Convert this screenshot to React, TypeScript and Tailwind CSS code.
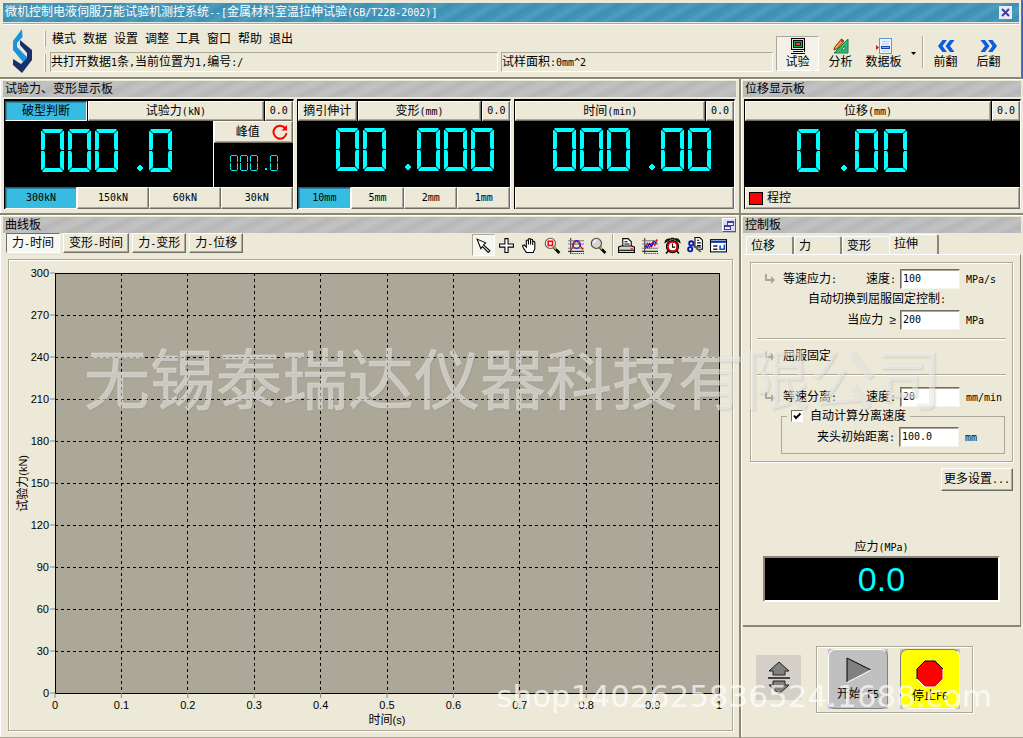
import React from "react";

const raised =
  "border border-t-white border-l-white border-r-[#716f64] border-b-[#716f64] bg-[#ece9d8] shadow-[inset_-1px_-1px_0_#aca899]";
const pressed =
  "border border-t-[#1d5f78] border-l-[#1d5f78] border-r-white border-b-white bg-[#38bbe0] shadow-[inset_1px_1px_0_#2687a6]";
const sunken =
  "border border-t-[#aca899] border-l-[#aca899] border-r-white border-b-white";
const etched =
  "border border-[#aca899] shadow-[1px_1px_0_#fff,inset_1px_1px_0_#fff]";
const strip =
  "bg-[repeating-linear-gradient(155deg,#b7b7b7_0px,#bfbfbf_5px,#c2c2c2_8px,#b7b7b7_14px)]";
const mono = "font-['DejaVu_Sans_Mono',monospace] text-[10px]";

/** Sets Latin runs in a half-width face beside the full-width Chinese text. */
function T({ children }: { children: string }) {
  const runs = children.match(/[\x20-\x7e]+|[^\x20-\x7e]+/g) ?? [];
  return (
    <>
      {runs.map((run, i) =>
        /^[\x20-\x7e]/.test(run) ? (
          <span key={i} className={`whitespace-pre ${mono}`}>
            {run}
          </span>
        ) : (
          run
        ),
      )}
    </>
  );
}

const BIG_SEGMENTS = [
  "2,0 21,0 22,1 19,4 4,4 1,1",
  "0,2 1,2 4,5 4,19 3,21 0,21",
  "23,2 22,2 19,5 19,19 20,21 23,21",
  "0,41 1,41 4,38 4,24 3,22 0,22",
  "23,41 22,41 19,38 19,24 20,22 23,22",
  "2,43 21,43 22,42 19,39 4,39 1,42",
];

function Lcd({ value, pitch = 27 }: { value: string; pitch?: number }) {
  return (
    <svg role="img" aria-label={value} width={pitch * value.length} height="43" className="shrink-0 fill-[#00ffff]">
      {value.split("").map((ch, i) => (
        <g key={i} transform={`translate(${i * pitch} 0)`}>
          {ch === "." ? (
            <polygon points="18,36 21,39 18,42 15,39" stroke="#00ffff" strokeWidth="1" />
          ) : (
            BIG_SEGMENTS.map((p) => <polygon key={p} points={p} />)
          )}
        </g>
      ))}
    </svg>
  );
}

function SmallLcd({ value }: { value: string }) {
  return (
    <svg role="img" aria-label={value} width={10 * value.length} height="16" fill="none" stroke="#00e5e5" shapeRendering="crispEdges">
      {value.split("").map((ch, i) => (
        <g key={i} transform={`translate(${i * 10} 0)`}>
          {ch === "." ? (
            <rect x="5" y="13" width="1" height="1" />
          ) : (
            <>
              <path d="M1 .5H7M1 15.500H7" />
              <path d="M.5 1V7M.5 8V15M7.5 1V7M7.5 8V15" />
            </>
          )}
        </g>
      ))}
    </svg>
  );
}

function PanelTitle({ children, action }: { children: string; action?: React.ReactNode }) {
  return (
    <div className={`flex h-4 items-center justify-between pl-[2px] ${strip}`}>
      <h2 className="leading-4">{children}</h2>
      {action}
    </div>
  );
}

function Cell({ on, className = "", children }: { on?: boolean; className?: string; children?: React.ReactNode }) {
  return (
    <button type="button" className={`flex items-center justify-center whitespace-nowrap ${on ? pressed : raised} ${className}`}>
      {children}
    </button>
  );
}

function Meter({ lead, leadOn, title, body, ranges, footer }: {
  lead?: string;
  leadOn?: boolean;
  title: string;
  body: React.ReactNode;
  ranges?: string[];
  footer?: React.ReactNode;
}) {
  return (
    <section className="flex min-w-0 flex-col border-t-2 border-l border-r border-t-black border-l-black border-r-white bg-black">
      <div className="flex h-5 gap-px">
        {lead && (
          <Cell on={leadOn} className={leadOn ? "w-[82px]" : "w-[59px]"}>
            {lead}
          </Cell>
        )}
        <Cell className="flex-1">
          <span>
            <T>{title}</T>
          </span>
        </Cell>
        <Cell className="w-7">
          <T>0.0</T>
        </Cell>
      </div>
      <div className="flex h-[66px]">{body}</div>
      <div className="flex h-[22px]">
        {ranges
          ? ranges.map((r, i) => (
              <Cell key={r} on={i === 0} className="flex-1">
                <T>{r}</T>
              </Cell>
            ))
          : footer}
      </div>
    </section>
  );
}

function Glyph({ children }: { children: React.ReactNode }) {
  return (
    <svg width="17" height="17" viewBox="0 0 16 16" fill="none" stroke="#000" aria-hidden="true">
      {children}
    </svg>
  );
}

const axes = (
  <>
    <path d="M3.5 1V15.5M1 13.5H16" stroke="#333" />
    <path d="M1 3.5H16M1 6.5H16M1 10.5H16" stroke="#777" />
    <path d="M3 15.5H16" stroke="#333" strokeDasharray="1 1" />
  </>
);

const tools: { name: string; icon: React.ReactNode }[] = [
  { name: "选择", icon: <path d="M2 2L10 5.5L8 7.5L14 13L12.500 14.500L7 9L5.500 11Z" fill="#fff" /> },
  { name: "十字", icon: <path d="M6.5 1.500H9.500V6.500H14.500V9.500H9.500V14.500H6.500V9.500H1.500V6.500H6.500Z" fill="#fff" /> },
  {
    name: "平移",
    icon: (
      <path
        d="M5 14.500L2 10L1.500 8L3 7.500L5 9.500V3.500Q6 2 7 3.500V7V2Q8 .7 9 2V7V2.500Q10 1.500 11 2.800V7.500V4.500Q12.300 3.500 13 5V11L11.500 14.500Z"
        fill="#fff"
      />
    ),
  },
  {
    name: "框选放大",
    icon: (
      <>
        <path d="M9.500 10L14.500 15" strokeWidth="2.500" />
        <path d="M9.500 9.500L11.500 11.500" stroke="#e8d000" strokeWidth="1.500" />
        <circle cx="6" cy="6" r="4.800" fill="#fff" stroke="#555" />
        <rect x="4" y="4" width="4" height="4" stroke="#f00" strokeWidth="1.500" />
      </>
    ),
  },
  {
    name: "曲线放大",
    icon: (
      <>
        {axes}
        <path d="M4 12L7 6Q9 2 11 6L15 12" stroke="#e00" />
        <circle cx="9" cy="7" r="3.500" stroke="#00f" />
      </>
    ),
  },
  {
    name: "放大镜",
    icon: (
      <>
        <path d="M9.500 10L14.500 15" strokeWidth="2.500" />
        <path d="M9.500 9.500L11.500 11.500" stroke="#e8d000" strokeWidth="1.500" />
        <circle cx="6" cy="6" r="4.800" fill="#d4d4d4" stroke="#444" />
        <path d="M3.500 6Q4 3.500 6 3.500" stroke="#fff" />
      </>
    ),
  },
  {
    name: "打印",
    icon: (
      <>
        <path d="M4.500 9V1.500H9.500L12.500 4.500V9" fill="#fff" />
        <path d="M6 4.500H9M6 6.500H11" />
        <path d="M.5 9.500L3 8.500H13L15.500 9.500V14.500H.5Z" fill="#d8d4c4" />
        <path d="M1 12.500H15" />
        <path d="M12 11H14" stroke="#f00" />
      </>
    ),
  },
  {
    name: "曲线",
    icon: (
      <>
        {axes}
        <path d="M4 11L6 6L8 10L11 5L13 8L15 2" stroke="#e00" />
        <path d="M4 8L6 10L8 6L10 9L12 4L15 6" stroke="#00f" />
      </>
    ),
  },
  {
    name: "定时",
    icon: (
      <>
        <path d="M1 5Q2 1 6 2ZM15 5Q14 1 10 2Z" fill="#888" />
        <path d="M6.500 1.500H9.500M4 13L2 15.500M12 13L14 15.500" strokeWidth="1.500" />
        <circle cx="8" cy="9" r="5" fill="#fff" strokeWidth="2.500" />
        <circle cx="8" cy="9" r="4.500" stroke="#f00" strokeWidth="1.500" />
        <path d="M8 6V9.500H10.500" />
      </>
    ),
  },
  {
    name: "剪切",
    icon: (
      <>
        <path d="M7.500 10V.5H12L14.500 3V11.500H9" fill="#fff" />
        <path d="M9.500 3H11.500M9.500 5.500H13M9.500 8H13" />
        <path d="M6 8L13 14M6 9L13 9.500" stroke="#555" strokeWidth="1.500" />
        <circle cx="4" cy="6" r="2" stroke="#0018b0" strokeWidth="1.700" />
        <circle cx="3" cy="11.500" r="2" stroke="#0018b0" strokeWidth="1.700" />
      </>
    ),
  },
  {
    name: "报表",
    icon: (
      <>
        <rect x=".5" y="2.500" width="15" height="11.500" fill="#fff" />
        <path d="M1 4.500H15" stroke="#0030d0" strokeWidth="2" />
        <path d="M3 8.500H7M3 11.500H7" stroke="#222" strokeWidth="1.500" />
        <path d="M9.500 8V11.500H13.500V7" stroke="#0050c0" strokeWidth="1.500" />
      </>
    ),
  },
];

function ToolButton({ label, active, icon }: { label: string; active?: boolean; icon: React.ReactNode }) {
  return (
    <button type="button" className={`flex h-[35px] w-[43px] flex-col items-center justify-end border whitespace-nowrap ${active ? "border-t-[#aca899] border-l-[#aca899] border-r-white border-b-white bg-[#f3f1e8]" : "border-transparent"}`}>
      {icon}
      <span className="leading-4">{label}</span>
    </button>
  );
}

function Chevrons({ flip }: { flip?: boolean }) {
  return (
    <svg width="18" height="16" viewBox="0 0 18 16" className={flip ? "-scale-x-100" : ""} fill="#0a5ce0" aria-hidden="true">
      <path d="M5.500 2H10L5.500 8L10 14H5.500L1 8ZM13 2H17.500L13 8L17.500 14H13L8.500 8Z" />
    </svg>
  );
}

function Chart() {
  const xs = Array.from({ length: 11 }, (_, i) => i);
  return (
    <div className={`mr-[6px] ml-2 mt-px mb-[6px] flex flex-1 ${etched} pt-[13px] pr-[13px]`}>
      <div className="flex w-[46px] items-center justify-start pb-9 pl-[6px]">
        <span className="rotate-180 leading-4 [text-orientation:sideways] [writing-mode:vertical-rl]">
          试验力<span className="text-[11px]">(kN)</span>
        </span>
      </div>
      <div className="flex flex-1 flex-col">
        <svg className="min-h-0 w-full flex-1 overflow-visible font-['Liberation_Sans',sans-serif] text-[11px]" stroke="#000">
          <rect width="100%" height="100%" fill="#aca899" shapeRendering="crispEdges" />
          {xs.map((i) => (
            <g key={i}>
              {i > 0 && i < 10 && (
                <>
                  <line x1={`${i * 10}%`} x2={`${i * 10}%`} y1="0" y2="100%" strokeDasharray="3 3" shapeRendering="crispEdges" />
                  <line y1={`${i * 10}%`} y2={`${i * 10}%`} x1="0" x2="100%" strokeDasharray="3 3" shapeRendering="crispEdges" />
                </>
              )}
              <svg x={`${i * 10}%`} y="100%" className="overflow-visible">
                <path d="M0 0V5" stroke="#888" />
                <text y="16" textAnchor="middle" stroke="none">
                  {i === 10 ? "1" : i === 0 ? "0" : `0.${i}`}
                </text>
              </svg>
              <svg y={`${i * 10}%`} className="overflow-visible">
                <path d="M-5 0H0" stroke="#888" />
                <text x="-6" y="4" textAnchor="end" stroke="none">
                  {300 - i * 30}
                </text>
              </svg>
            </g>
          ))}
        </svg>
        <div className="flex h-[37px] items-end justify-center pb-[2px] leading-4">
          <span>
            时间<span className="text-[11px]">(s)</span>
          </span>
        </div>
      </div>
    </div>
  );
}

const inputBox = `h-5 w-[60px] border border-t-[#716f64] border-l-[#716f64] border-r-[#f5f4ea] border-b-[#f5f4ea] bg-white pl-[2px] pb-[2px] ${mono} shadow-[inset_1px_1px_0_#aca899]`;

function Branch() {
  return (
    <svg width="19" height="14" viewBox="0 0 19 14" fill="none" stroke="#aca899" strokeWidth="2" aria-hidden="true">
      <path d="M2 2V8H9" />
      <path d="M7 4L11 8L7 12Z" fill="#aca899" stroke="none" />
    </svg>
  );
}

function Field({ id, name, label, value, unit, narrow }: {
  id: string;
  name?: string;
  label: string;
  value: string;
  unit: string;
  narrow?: boolean;
}) {
  return (
    <div className="flex h-5 items-center">
      {name && (
        <>
          <Branch />
          <span>
            <T>{name}</T>
          </span>
        </>
      )}
      <label htmlFor={id} className="mr-1 ml-auto">
        <T>{label}</T>
      </label>
      <input id={id} defaultValue={value} className={inputBox} />
      <span className={`ml-[6px] ${narrow ? "w-[39px]" : "w-[46px]"}`}>
        <T>{unit}</T>
      </span>
    </div>
  );
}

const Rule = () => <div className="mx-[6px] h-[2px] border-t border-b border-t-[#aca899] border-b-white" />;

export default function App() {
  return (
    <div className="relative flex min-h-screen flex-col overflow-hidden bg-[#ece9d8] font-['Liberation_Sans','Noto_Sans_CJK_SC',sans-serif] text-[12px] leading-4 text-black">
      <header className="border-r border-b-2 border-r-[#3c62b8] border-b-[#8a8778] pt-[3px] shadow-[inset_-1px_0_0_#716f64]">
        <div className="mr-[3px] ml-[3px] flex h-[19px] items-center justify-between bg-[repeating-linear-gradient(150deg,#3c8fb2_0px,#4396b8_6px,#509ebe_9px,#4192b4_14px)] pr-[7px] pl-[2px] text-white">
          <h1>
            <T>微机控制电液伺服万能试验机测控系统--[金属材料室温拉伸试验(GB/T228-2002)]</T>
          </h1>
          <button type="button" aria-label="关闭" className="flex h-[13px] w-[13px] items-center justify-center bg-[#ece9f0]">
            <svg width="9" height="9" viewBox="0 0 9 9" stroke="#3a3fa0" strokeWidth="2">
              <path d="M1 1L8 8M8 1L1 8" />
            </svg>
          </button>
        </div>
        <div className="mx-[3px] mt-px flex h-[54px] border-t border-t-[#aca899] pr-[9px] shadow-[inset_0_1px_0_#fff]">
          <div className="flex w-[41px] items-center pl-[9px]">
            <svg width="22" height="46" viewBox="0 0 22 46" aria-hidden="true">
              <path d="M10 1L10.500 9L5 15V19L16 30L11 34L1 22V13Z" fill="#1a94e0" />
              <path d="M8 12L20 22V32L10 45L1 37V31L9 36L15 30V25L8 17Z" fill="#17306e" />
            </svg>
          </div>
          <div className="flex min-w-0 flex-1 flex-col">
            <div className="flex h-[26px] items-center pt-1">
              <span className="h-4 w-[2px] border-r border-l border-r-[#aca899] border-l-white" />
              <nav className="ml-[6px] flex gap-[7px]">
                {["模式", "数据", "设置", "调整", "工具", "窗口", "帮助", "退出"].map((m) => (
                  <a key={m} href="#">
                    {m}
                  </a>
                ))}
              </nav>
            </div>
            <div className="flex h-[22px] items-end gap-[3px]">
              <span className="mr-px h-[18px] w-[2px] border-r border-l border-r-[#aca899] border-l-white" />
              <div className={`h-5 flex-[449] truncate leading-[18px] ${sunken}`}>
                <T>共打开数据1条,当前位置为1,编号:/</T>
              </div>
              <div className={`h-5 flex-[272] truncate leading-[18px] ${sunken}`}>
                <T>试样面积:0mm^2</T>
              </div>
            </div>
          </div>
          <div className="ml-[3px] flex items-start pt-[12px]">
            <ToolButton
              label="试验"
              active
              icon={
                <svg width="16" height="16" viewBox="0 0 16 16" stroke="#000" shapeRendering="crispEdges" aria-hidden="true">
                  <rect x="1.500" y=".5" width="13" height="11" fill="#ddd" />
                  <rect x="3.500" y="2.500" width="9" height="7" fill="#00c020" />
                  <rect x="5.500" y="4.500" width="5" height="3" fill="#f030a0" stroke="#222" />
                  <path d="M3 13.500H13M1 15.500H15M14.500 12V14" />
                </svg>
              }
            />
            <ToolButton
              label="分析"
              icon={
                <svg width="16" height="16" viewBox="0 0 16 16" aria-hidden="true">
                  <path d="M15 1V15H1Z" fill="#35b878" stroke="#14804a" />
                  <path d="M12 8V12H8Z" fill="#ece9d8" stroke="#14804a" />
                  <path d="M1.500 9.500L8.500 1L11 3L4.500 10.500L1 12Z" fill="#f0a030" stroke="#8a2a10" />
                  <path d="M8.500 1L11 3L9.500 4.500L7 2.500Z" fill="#d83020" />
                </svg>
              }
            />
            <ToolButton
              label="数据板"
              icon={
                <svg width="18" height="16" viewBox="0 0 18 16" aria-hidden="true">
                  <rect x="4.500" y=".5" width="12" height="15" fill="#eef3fa" stroke="#5a9ad8" />
                  <path d="M7 3.500H14M7 6H14M7 13H14" stroke="#bcc8d8" />
                  <rect x="6.500" y="8.500" width="8" height="2" fill="#80b0f0" stroke="#1040b0" />
                  <path d="M1 7L4 9.500L1 12Z" fill="#e01010" />
                </svg>
              }
            />
            <button type="button" aria-label="更多" className="flex h-[35px] w-[17px] items-center justify-center">
              <svg width="5" height="3" viewBox="0 0 5 3">
                <path d="M0 0H5L2.500 3Z" />
              </svg>
            </button>
            <span className="h-8 w-[2px] border-r border-l border-r-white border-l-[#aca899]" />
            <ToolButton label="前翻" icon={<Chevrons />} />
            <ToolButton label="后翻" icon={<Chevrons flip />} />
          </div>
        </div>
      </header>

      <main className="grid flex-1 grid-cols-[minmax(0,1fr)_282px] grid-rows-[auto_1fr]">
        <section className="border-r-2 border-b-2 border-r-[#8a8778] border-b-[#8a8778] pt-[2px] pr-[3px] pl-[3px] shadow-[inset_1px_1px_0_#fff]">
          <PanelTitle>试验力、变形显示板</PanelTitle>
          <div className="grid grid-cols-[289fr_214fr_220fr] gap-[3px] pt-[2px] pr-px pb-1 pl-px">
            <Meter
              lead="破型判断"
              leadOn
              title="试验力(kN)"
              ranges={["300kN", "150kN", "60kN", "30kN"]}
              body={
                <>
                  <div className="flex flex-1 items-center pb-[7px] pl-9">
                    <Lcd value="000.0" />
                  </div>
                  <div className="flex w-20 flex-col border-l border-white">
                    <button type="button" className={`flex h-[22px] items-center justify-end gap-3 pr-1 ${raised}`}>
                      峰值
                      <svg width="16" height="16" viewBox="0 0 16 16" fill="none" stroke="#f00" strokeWidth="2" aria-hidden="true">
                        <path d="M13 4A6.500 6.500 0 1 0 14.500 9" />
                        <path d="M15 1V6.500H9.500Z" fill="#f00" stroke="none" />
                      </svg>
                    </button>
                    <div className="flex flex-1 items-center pb-1 pl-4">
                      <SmallLcd value="000.0" />
                    </div>
                  </div>
                </>
              }
            />
            <Meter
              lead="摘引伸计"
              title="变形(mm)"
              ranges={["10mm", "5mm", "2mm", "1mm"]}
              body={
                <div className="flex flex-1 items-center pb-[9px] pl-[38px]">
                  <Lcd value="00.000" />
                </div>
              }
            />
            <Meter
              title="时间(min)"
              footer={<div className={`flex-1 ${raised}`} />}
              body={
                <div className="flex flex-1 items-center pb-[9px] pl-[38px]">
                  <Lcd value="000.00" />
                </div>
              }
            />
          </div>
        </section>

        <section className="border-b-2 border-b-[#8a8778] pt-[2px] pr-[2px] pl-[2px] shadow-[inset_1px_1px_0_#fff]">
          <PanelTitle>位移显示板</PanelTitle>
          <div className="grid pt-[2px] pb-1 pl-px">
            <Meter
              title="位移(mm)"
              footer={
                <div className={`flex flex-1 items-center gap-1 pl-[3px] ${raised}`}>
                  <span className="h-[13px] w-[14px] border border-black bg-[#f00]" />
                  程控
                </div>
              }
              body={
                <div className="flex flex-1 items-center pb-[7px] pl-[52px]">
                  <Lcd value="0.00" pitch={29} />
                </div>
              }
            />
          </div>
        </section>

        <section className="flex flex-col border-r-2 border-b border-r-[#8a8778] border-b-[#aca899] pt-[2px] shadow-[inset_1px_1px_0_#fff]">
          <div className="pr-[3px] pl-[3px]">
            <PanelTitle
              action={
                <button type="button" aria-label="还原窗口" className="flex h-[14px] w-[14px] items-center justify-center border border-t-white border-l-white border-r-[#3060b0] border-b-[#3060b0] bg-[#dcdcf0]">
                  <svg width="10" height="10" viewBox="0 0 10 10" fill="#ececfa" stroke="#3a3fa0" shapeRendering="crispEdges">
                    <rect x="3.500" y="1" width="6" height="4" />
                    <path d="M3 1.500H10" strokeWidth="2" />
                    <rect x=".5" y="5" width="6" height="4" />
                    <path d="M0 5.500H7" strokeWidth="2" />
                  </svg>
                </button>
              }
            >
              曲线板
            </PanelTitle>
          </div>
          <div className="flex h-[25px] items-start justify-between pr-[9px] pl-[6px]">
            <div className="flex gap-[3px]">
              {["力-时间", "变形-时间", "力-变形", "力-位移"].map((t, i) => (
                <button
                  key={t}
                  type="button"
                  className={`h-5 px-[5px] whitespace-nowrap leading-[17px] ${i === 0 ? "border border-t-[#716f64] border-l-[#716f64] border-r-white border-b-white bg-[#f8f7f1]" : raised}`}
                >
                  <T>{t}</T>
                </button>
              ))}
            </div>
            <div className="flex items-center pt-px">
              {tools.map((t, i) => (
                <React.Fragment key={t.name}>
                  {i === 6 && <span className="mr-px ml-[2px] h-[22px] w-[2px] border-r border-l border-r-white border-l-[#aca899]" />}
                  <button
                    type="button"
                    aria-label={t.name}
                    className={`flex h-[22px] w-[23px] items-center justify-center border ${i === 0 ? "border-t-[#aca899] border-l-[#aca899] border-r-white border-b-white bg-[#f6f5ee]" : "border-transparent"}`}
                  >
                    <Glyph>{t.icon}</Glyph>
                  </button>
                </React.Fragment>
              ))}
            </div>
          </div>
          <Chart />
        </section>

        <section className="flex flex-col border-b border-b-[#aca899] pt-[2px] pr-[2px] pl-[2px] shadow-[inset_1px_1px_0_#fff]">
          <PanelTitle>控制板</PanelTitle>
          <div role="tablist" className="flex h-[21px] items-end pl-[3px]">
            {["位移", "力", "变形", "拉伸"].map((t, i) => (
              <button
                key={t}
                type="button"
                role="tab"
                aria-selected={i === 3}
                className={`rounded-t-[3px] border-t border-l border-t-white border-l-white pl-1 text-left ${i === 3 ? "h-5 w-[50px] border-r-2 border-r-[#8a8778] pb-[2px]" : i === 2 ? "h-[18px] w-[47px]" : "h-[18px] w-12 border-r-2 border-r-[#8a8778]"}`}
              >
                {t}
              </button>
            ))}
          </div>
          <div className="flex flex-1 flex-col border-t border-r border-b-2 border-t-white border-r-[#8a8778] border-b-[#8a8778] pt-[7px] pr-[7px] pl-[7px]">
            <div className={`pt-[6px] pb-[7px] ${etched}`}>
              <div className="pl-[13px]">
                <Field id="stress-rate" name="等速应力:" label="速度:" value="100" unit="MPa/s" />
                <p className="pl-[44px] leading-5">
                  <T>自动切换到屈服固定控制:</T>
                </p>
                <Field id="stress-limit" label="当应力 ≥" value="200" unit="MPa" />
              </div>
              <div className="pt-2 pb-[6px]">
                <Rule />
              </div>
              <div className="flex h-5 items-center pl-[13px]">
                <Branch />
                屈服固定
              </div>
              <div className="pt-2 pb-[11px]">
                <Rule />
              </div>
              <div className="pl-[13px]">
                <Field id="split-rate" name="等速分离:" label="速度:" value="20" unit="mm/min" />
              </div>
              <fieldset className="mr-[7px] ml-[30px] border border-[#aca899] pb-[6px]">
                <legend className="ml-[5px] px-1">
                  <label className="flex h-[18px] items-center gap-[7px]">
                    <span className="relative h-3 w-3">
                      <input
                        type="checkbox"
                        defaultChecked
                        className="peer block h-3 w-3 appearance-none border border-t-[#716f64] border-l-[#716f64] border-r-white border-b-white bg-white"
                      />
                      <svg viewBox="0 0 12 12" className="pointer-events-none absolute inset-0 hidden h-3 w-3 peer-checked:block" fill="none" stroke="#000" strokeWidth="2">
                        <path d="M3 5.500L5 8L9.500 3.500" />
                      </svg>
                    </span>
                    自动计算分离速度
                  </label>
                </legend>
                <div className="pt-[2px]">
                  <Field id="grip-distance" label="夹头初始距离:" value="100.0" unit="mm" narrow />
                </div>
              </fieldset>
            </div>
            <button type="button" className={`mt-[6px] h-[23px] self-end px-[2px] ${raised}`}>
              <T>更多设置...</T>
            </button>
            <div className="mt-auto px-[13px] pb-[23px] text-center">
              <div>
                <T>应力(MPa)</T>
              </div>
              <output className="block h-[46px] border-2 border-t-[#8a8778] border-l-[#8a8778] border-r-white border-b-white bg-black text-[34px] leading-[42px] text-[#00ffff]">
                0.0
              </output>
            </div>
          </div>
          <div className="flex h-[110px] items-start gap-[15px] pt-[19px] pl-[13px]">
            <button type="button" aria-label="升降" className="mt-[9px] flex h-[45px] w-[45px] items-center justify-center bg-[#d4d0c8]">
              <svg width="22" height="34" viewBox="0 0 22 34" fill="#808080" stroke="#222">
                <path d="M11 1L21 10H17V14H5V10H1Z" />
                <path d="M11 33L21 24H17V20H5V24H1Z" />
                <path d="M0 17H22" stroke="#444" strokeWidth="2" />
              </svg>
            </button>
            <div className={`flex h-[67px] w-[157px] items-start gap-3 pt-[2px] pl-[11px] ${etched}`}>
              <div className="bg-[#c0c0c8]">
                <button type="button" className="flex h-[60px] w-[60px] flex-col items-center rounded-[7px] border border-t-white border-l-white border-r-[#808080] border-b-[#808080] bg-[#c0c0c0] pt-[7px]">
                  <svg width="27" height="27" viewBox="0 0 27 27">
                    <path d="M2 1L26 13L2 25Z" fill="#808080" />
                    <path d="M2 25V1L26 13" fill="none" stroke="#000" />
                    <path d="M26 13L2 25.500" stroke="#fff" />
                  </svg>
                  <span className="mt-[2px]">
                    <T>开始 F5</T>
                  </span>
                </button>
              </div>
              <div className="bg-[#c0c0c8]">
                <button type="button" className="flex h-[60px] w-[60px] flex-col items-center rounded-[7px] border border-t-[#808080] border-l-[#808080] border-r-white border-b-white bg-[#ff0] pt-[10px]">
                  <svg width="28" height="28" viewBox="0 0 28 28">
                    <path d="M9 1H19L27 9V19L19 27H9L1 19V9Z" fill="#f00" />
                    <path d="M1 19V9L9 1H19L27 9" fill="none" stroke="#000" />
                    <path d="M27 9V19L19 27H9L1 19" fill="none" stroke="#fff" />
                  </svg>
                  <span>
                    <T>停止F6</T>
                  </span>
                </button>
              </div>
            </div>
          </div>
        </section>
      </main>

      <p className="pointer-events-none absolute top-[341px] left-[84px] text-[66px] leading-[80px] whitespace-nowrap text-white/45 [-webkit-text-stroke:1px_rgba(225,225,220,0.4)] [text-shadow:1px_1px_2px_rgba(120,120,110,0.25)]">
        无锡泰瑞达仪器科技有限公司
      </p>
      <p className="pointer-events-none absolute right-[31px] bottom-[24px] font-['DejaVu_Sans',sans-serif] text-[31px] leading-9 whitespace-nowrap text-white/70">
        shop1402625836524.1688.com
      </p>
    </div>
  );
}
